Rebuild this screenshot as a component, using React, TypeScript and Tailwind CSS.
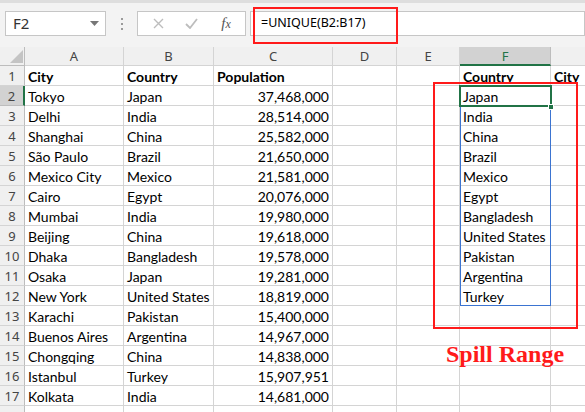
import React from "react";

const rows: [string, string, string][] = [
  ["Tokyo", "Japan", "37,468,000"],
  ["Delhi", "India", "28,514,000"],
  ["Shanghai", "China", "25,582,000"],
  ["São Paulo", "Brazil", "21,650,000"],
  ["Mexico City", "Mexico", "21,581,000"],
  ["Cairo", "Egypt", "20,076,000"],
  ["Mumbai", "India", "19,980,000"],
  ["Beijing", "China", "19,618,000"],
  ["Dhaka", "Bangladesh", "19,578,000"],
  ["Osaka", "Japan", "19,281,000"],
  ["New York", "United States", "18,819,000"],
  ["Karachi", "Pakistan", "15,400,000"],
  ["Buenos Aires", "Argentina", "14,967,000"],
  ["Chongqing", "China", "14,838,000"],
  ["Istanbul", "Turkey", "15,907,951"],
  ["Kolkata", "India", "14,681,000"],
];

const spill = [
  "Japan",
  "India",
  "China",
  "Brazil",
  "Mexico",
  "Egypt",
  "Bangladesh",
  "United States",
  "Pakistan",
  "Argentina",
  "Turkey",
];

const cellBase =
  "h-[20px] border-r border-b border-[#d4d4d4] px-[3px] pt-[1px] leading-[19px] whitespace-nowrap overflow-visible text-black";

function RowHeader({ n, active }: { n: number; active?: boolean }) {
  return (
    <div
      className={
        "h-[20px] border-b text-center pt-[1px] leading-[19px] text-[13px] text-[#444] " +
        (active
          ? "bg-[#d2d2d2] border-b-[#bdbdbd] border-r-2 border-r-[#217346]"
          : "bg-[#f0f0f0] border-b-[#d4d4d4] border-r border-r-[#bdbdbd]")
      }
      style={{ fontFamily: "'Noto Sans', 'DejaVu Sans', sans-serif" }}
    >
      {n <= 17 ? n : ""}
    </div>
  );
}

export default function App() {
  const letters = ["A", "B", "C", "D", "E", "F", ""];
  const allRows: { r: number; cells: string[]; bold?: boolean }[] = [];
  allRows.push({ r: 1, cells: ["City", "Country", "Population", "", "", "Country", "City"], bold: true });
  for (let i = 0; i < 17; i++) {
    const d = rows[i];
    allRows.push({
      r: i + 2,
      cells: [d ? d[0] : "", d ? d[1] : "", d ? d[2] : "", "", "", spill[i] ?? "", ""],
    });
  }

  return (
    <div
      className="relative w-[585px] h-[412px] overflow-hidden bg-white"
      style={{ fontFamily: "Lato, 'Noto Sans', sans-serif" }}
    >
      {/* toolbar */}
      <div className="h-[47px] bg-[#f3f3f3] border-t-[3px] border-[#dedede] relative">
        <div className="flex items-center pt-[8px] pl-[5px] gap-0">
          <div className="w-[101px] h-[25px] bg-white border border-[#c6c6c6] flex items-center justify-between pl-[7px] pr-[6px]">
            <span
              className="text-[15px] text-[#333]"
              style={{ fontFamily: "'Noto Sans', sans-serif" }}
            >
              F2
            </span>
            <svg width="9" height="5" viewBox="0 0 9 5">
              <path d="M0 0 L9 0 L4.5 5 Z" fill="#777" />
            </svg>
          </div>
          <div className="w-[31px] flex flex-col items-center gap-[3px]">
            <span className="w-[2px] h-[2px] bg-[#9a9a9a]" />
            <span className="w-[2px] h-[2px] bg-[#9a9a9a]" />
            <span className="w-[2px] h-[2px] bg-[#9a9a9a]" />
          </div>
          <div className="w-[109px] h-[25px] bg-white border border-[#c6c6c6] flex items-center">
            <div className="w-[40px] flex justify-center">
              <svg width="11" height="11" viewBox="0 0 11 11">
                <path d="M1 1 L10 10 M10 1 L1 10" stroke="#bdbdbd" strokeWidth="1.4" />
              </svg>
            </div>
            <div className="w-[26px] flex justify-center">
              <svg width="13" height="11" viewBox="0 0 13 11">
                <path d="M1 6 L5 10 L12 1" stroke="#bdbdbd" strokeWidth="1.8" fill="none" />
              </svg>
            </div>
            <div
              className="flex-1 text-center pl-[3px] text-[15px] italic text-[#555]"
              style={{ fontFamily: "'Liberation Serif', serif" }}
            >
              f<span className="text-[12px]">x</span>
            </div>
          </div>
          <div className="ml-[4px] flex-1 h-[25px] bg-white border border-[#c6c6c6] flex items-center pl-[10px]">
            <span
              className="text-[12.5px] text-black"
              style={{ fontFamily: "'Noto Sans', sans-serif" }}
            >
              =UNIQUE(B2:B17)
            </span>
          </div>
        </div>
      </div>

      {/* sheet */}
      <div className="grid grid-cols-[25px_99px_90px_119px_64px_63px_91px_60px]">
        {/* column headers */}
        <div className="h-[19px] bg-[#f0f0f0] border-r border-b border-[#bdbdbd] relative">
          <svg className="absolute left-[10px] top-[3px]" width="13" height="13" viewBox="0 0 13 13">
            <path d="M13 0 L13 13 L0 13 Z" fill="#c4c4c4" />
          </svg>
        </div>
        {letters.map((l, i) => (
          <div
            key={i}
            className={
              "h-[19px] text-center leading-[18px] text-[13px] border-r " +
              (l === "F"
                ? "bg-[#d2d2d2] text-[#217346] border-b-2 border-b-[#217346] border-r-[#bdbdbd]"
                : "bg-[#f0f0f0] text-[#444] border-b border-[#d4d4d4] border-r-[#d4d4d4]")
            }
            style={{ fontFamily: "'Noto Sans', sans-serif" }}
          >
            {l}
          </div>
        ))}

        {allRows.map((row) => (
          <React.Fragment key={row.r}>
            <RowHeader n={row.r} active={row.r === 2} />
            {row.cells.map((c, ci) => (
              <div
                key={ci}
                className={
                  cellBase +
                  " text-[14px] " +
                  (row.bold ? "font-bold " : "") +
                  (ci === 2 && !row.bold ? "text-right" : "")
                }
              >
                {c}
              </div>
            ))}
          </React.Fragment>
        ))}
      </div>

      {/* spill blue border */}
      <div className="absolute left-[460px] top-[86px] w-[91px] h-[220px] border border-[#3b74d1] pointer-events-none" />
      {/* active cell */}
      <div className="absolute left-[459px] top-[85px] w-[93px] h-[22px] border-2 border-[#217346] pointer-events-none" />
      <div className="absolute left-[548px] top-[104px] w-[6px] h-[6px] bg-[#217346] border border-white" />

      {/* red annotation boxes */}
      <div className="absolute left-[253px] top-[7px] w-[145px] h-[37px] border-2 border-[#ff1a1a] pointer-events-none" />
      <div className="absolute left-[433px] top-[82px] w-[145px] h-[247px] border-2 border-[#ff1a1a] pointer-events-none" />
      <div
        className="absolute left-[446px] top-[336px] text-[24px] font-bold text-[#ff1a1a] whitespace-nowrap"
        style={{ fontFamily: "'Liberation Serif', serif" }}
      >
        Spill Range
      </div>
    </div>
  );
}
